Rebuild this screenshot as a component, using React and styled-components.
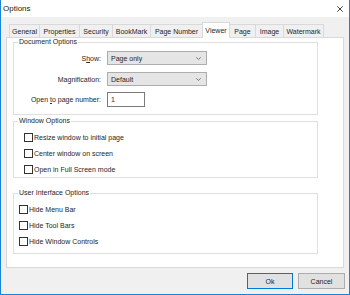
import React from 'react';
import styled, { createGlobalStyle } from 'styled-components';

const GlobalStyle = createGlobalStyle`
html, body {
  margin: 0;
  padding: 0;
  background: #ffffff;
}
* {
  box-sizing: border-box;
}
`;

const Window = styled.div`
width: 350px;
height: 295px;
display: flex;
flex-direction: column;
background: #f0f0f0;
border-left: 1px solid #1883d7;
border-right: 1px solid #1883d7;
border-bottom: 1px solid #1883d7;
font-family: "Liberation Sans", Arial, sans-serif;
font-size: 7px;
color: #262626;
`;

const TitleBar = styled.div`
height: 17px;
flex: none;
display: flex;
align-items: center;
justify-content: space-between;
background: #fff;
padding: 0 6px 0 2px;
font-size: 8px;
color: #1a1a1a;
`;

const Body = styled.div`
flex: 1;
display: flex;
flex-direction: column;
padding: 5px 5px 0 5px;
`;

const TabRow = styled.div`
height: 15px;
display: flex;
align-items: flex-end;
padding-left: 3px;
position: relative;
z-index: 1;
`;

const Tab = styled.div`
width: ${({ w }) => w}px;
height: ${({ active }) => (active ? '16px' : '13px')};
margin-bottom: ${({ active }) => (active ? '-1px' : '0')};
margin-left: -1px;
display: flex;
align-items: center;
justify-content: center;
padding-top: ${({ active }) => (active ? '0' : '1px')};
background: ${({ active }) => (active ? '#fff' : '#f0f0f0')};
border: 1px solid #d9d9d9;
border-bottom: none;
white-space: nowrap;
&:first-child {
  margin-left: 0;
}
`;

const Panel = styled.div`
height: 231px;
flex: none;
background: #fff;
border: 1px solid #d9d9d9;
padding: 0 0 0 6px;
`;

const GroupBox = styled.div`
position: relative;
width: 305px;
margin-top: ${({ top }) => top}px;
padding: ${({ pad }) => pad};
border: 1px solid #dfdfdf;
`;

const Legend = styled.span`
position: absolute;
top: -5px;
left: 4px;
padding: 0 1px;
background: #fff;
line-height: 8px;
`;

const FormGrid = styled.div`
display: grid;
grid-template-columns: 87px auto;
column-gap: 6px;
align-items: center;
`;

const FieldLabel = styled.div`
text-align: right;
white-space: nowrap;
margin-top: ${({ gap }) => gap || 0}px;
`;

const Control = styled.div`
margin-top: ${({ gap }) => gap || 0}px;
`;

const Select = styled.div`
width: 100px;
height: 14px;
display: flex;
align-items: center;
justify-content: space-between;
padding: 0 5px 0 3px;
background: #e5e5e5;
border: 1px solid #adadad;
`;

const TextInput = styled.div`
width: 38px;
height: 15px;
display: flex;
align-items: center;
padding-left: 3px;
background: #fff;
border: 1px solid #7a7a7a;
`;

const CheckList = styled.div`
display: flex;
flex-direction: column;
gap: 4px;
`;

const CheckRow = styled.div`
height: 12px;
display: flex;
align-items: center;
gap: 1px;
`;

const Box = styled.span`
width: 9px;
height: 9px;
flex: none;
background: #fff;
border: 1px solid #333;
`;

const ButtonRow = styled.div`
display: flex;
justify-content: flex-end;
gap: 5px;
margin-top: 5px;
margin-right: -1px;
`;

const Button = styled.div`
width: ${({ w }) => w}px;
height: 16px;
display: flex;
align-items: center;
justify-content: center;
background: #e1e1e1;
border: 1px solid ${({ primary }) => (primary ? '#0078d7' : '#adadad')};
`;

const Chevron = () => (
    <svg width="5" height="3" viewBox="0 0 5 3">
        <path d="M0.3 0.3 L2.5 2.5 L4.7 0.3" fill="none" stroke="#606060" strokeWidth="0.8" />
    </svg>
);

const CloseIcon = () => (
    <svg width="6" height="6" viewBox="0 0 6 6">
        <path d="M0.3 0.3 L5.7 5.7 M5.7 0.3 L0.3 5.7" stroke="#111" strokeWidth="0.8" />
    </svg>
);

const tabs = [
    ['General', 31],
    ['Properties', 41],
    ['Security', 34],
    ['BookMark', 39],
    ['Page Number', 53],
    ['Viewer', 28],
    ['Page', 27],
    ['Image', 29],
    ['Watermark', 41],
];

const Check = ({ label }) => (
    <CheckRow>
        <Box />
        <span>{label}</span>
    </CheckRow>
);

const App = () => {
    return (
        <>
            <GlobalStyle />
            <Window>
                <TitleBar>
                    <span>Options</span>
                    <CloseIcon />
                </TitleBar>
                <Body>
                    <TabRow>
                        {tabs.map(([name, w]) => (
                            <Tab key={name} w={w} active={name === 'Viewer'}>{name}</Tab>
                        ))}
                    </TabRow>
                    <Panel>
                        <GroupBox top={4} pad="8px 0 7px 0">
                            <Legend>Document Options</Legend>
                            <FormGrid>
                                <FieldLabel>S<u>h</u>ow:</FieldLabel>
                                <Control>
                                    <Select>Page only<Chevron /></Select>
                                </Control>
                                <FieldLabel gap={7}>Ma<u>g</u>nification:</FieldLabel>
                                <Control gap={7}>
                                    <Select>Default<Chevron /></Select>
                                </Control>
                                <FieldLabel gap={6}>Open <u>t</u>o page number:</FieldLabel>
                                <Control gap={6}>
                                    <TextInput>1</TextInput>
                                </Control>
                            </FormGrid>
                        </GroupBox>
                        <GroupBox top={6} pad="9px 0 2px 10px">
                            <Legend>Window Options</Legend>
                            <CheckList>
                                <Check label="Resize window to initial page" />
                                <Check label="Center window on screen" />
                                <Check label="Open in Full Screen mode" />
                            </CheckList>
                        </GroupBox>
                        <GroupBox top={15} pad="9px 0 6px 5px">
                            <Legend>User Interface Options</Legend>
                            <CheckList>
                                <Check label="Hide Menu Bar" />
                                <Check label="Hide Tool Bars" />
                                <Check label="Hide Window Controls" />
                            </CheckList>
                        </GroupBox>
                    </Panel>
                    <ButtonRow>
                        <Button w={46} primary>Ok</Button>
                        <Button w={47}>Cancel</Button>
                    </ButtonRow>
                </Body>
            </Window>
        </>
    );
};

export default App;
